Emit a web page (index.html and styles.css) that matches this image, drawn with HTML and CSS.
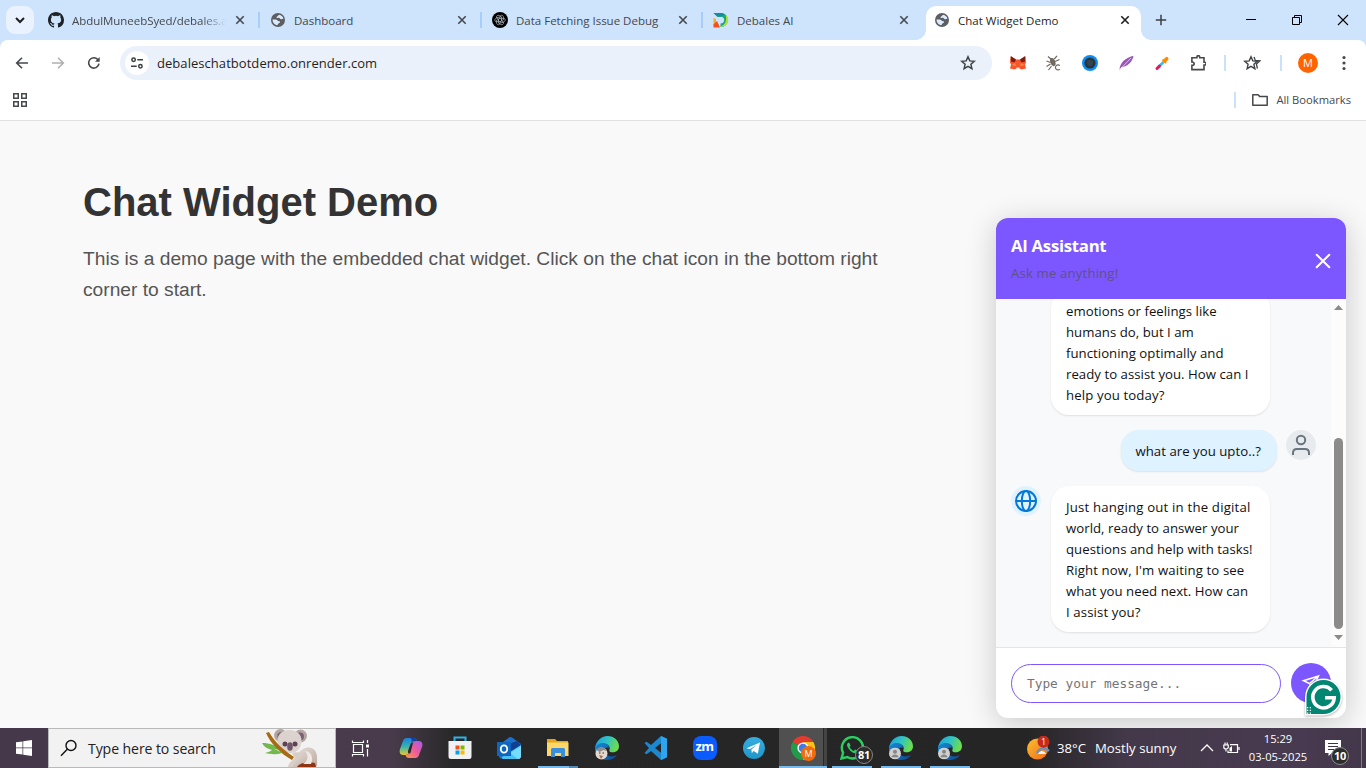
FILE: index.html
```html
<!DOCTYPE html>
<html lang="en">
<head>
<meta charset="utf-8">
<title>Chat Widget Demo</title>
<link rel="stylesheet" href="styles.css">
</head>
<body>
<svg class="defs" aria-hidden="true">
  <defs>
    <linearGradient id="edgeTop" x1="0" y1="0" x2="1" y2=".3"><stop offset="0" stop-color="#1b9de2"/><stop offset=".55" stop-color="#2fc3c4"/><stop offset="1" stop-color="#6bdc50"/></linearGradient>
    <linearGradient id="edgeLow" x1="0" y1="0" x2="1" y2="1"><stop offset="0" stop-color="#1689d6"/><stop offset="1" stop-color="#0d4a94"/></linearGradient>
    <linearGradient id="cpA" x1="0" y1="0" x2="0" y2="1"><stop offset="0" stop-color="#1f7fe0"/><stop offset=".5" stop-color="#35b3b0"/><stop offset="1" stop-color="#e8c92c"/></linearGradient>
    <linearGradient id="cpB" x1="1" y1="0" x2="0" y2="1"><stop offset="0" stop-color="#a65be8"/><stop offset=".5" stop-color="#ee5a9a"/><stop offset="1" stop-color="#ff9a4a"/></linearGradient>
    <linearGradient id="sun" x1="0" y1="0" x2="1" y2="1"><stop offset="0" stop-color="#fdc02c"/><stop offset="1" stop-color="#ee6a1c"/></linearGradient>
    <linearGradient id="fur" x1="0" y1="0" x2="1" y2="1"><stop offset="0" stop-color="#e9e1dc"/><stop offset="1" stop-color="#bba9a0"/></linearGradient>
    <linearGradient id="tg" x1="0" y1="0" x2="0" y2="1"><stop offset="0" stop-color="#37aee2"/><stop offset="1" stop-color="#1e96c8"/></linearGradient>
    <symbol id="close" viewBox="0 0 10 10"><path d="M1.300 1.300l7.400 7.400M8.700 1.300L1.300 8.700" fill="none" stroke="currentColor" stroke-width="1.600"/></symbol>
    <symbol id="globe" viewBox="0 0 16 16"><circle cx="8" cy="8" r="7" fill="#5b5f63"/><path d="M9 2.700c2.300.3 4 1.700 4.400 3.900-.8.300-1.500.9-2.400.7-1-.2-1-1.300-2.100-1.500-.9-.2-1.200.4-2 .2-.7-.4-.2-1.300.5-1.700.8-.6.900-1 1.600-1.600zM2.500 7.600l3.200-.1c1.400.1 1.600 1.100 2.600 1.500 1 .3 1.700.2 1.700 1.100 0 1.200-1.500 1-2 1.900-.3.600-.2 1.200-1 1.200C4.300 12.800 2.400 10.500 2.500 7.600z" fill="#dceafb"/></symbol>
    <symbol id="star" viewBox="0 0 16 16"><path d="M8 1.800l1.800 4.100 4.500.4-3.400 3 1 4.400L8 11.400l-3.900 2.300 1-4.400-3.400-3 4.500-.4z" fill="none" stroke="#3f4246" stroke-width="1.500"/></symbol>
    <symbol id="edge" viewBox="0 0 24 24">
      <path d="M0 12C1 5 6 0 12.500 0 19 0 24 4.600 24 10.300c0 3.700-2.600 6-6 6-2.800 0-4.200-1.100-3.700-2.100C15.600 11.500 14 8 9.500 8 5 8 1 10.500 0 15z" fill="url(#edgeTop)"/>
      <path d="M0 12c1.500-4 5-5.500 9-5 3 .4 5 2.300 5.100 5-3.200-1.700-5.700 1.500-4 5 1.700 3.600 7 4.600 12 1.700C20 22 16 24 12 24 5 24-.5 18.500 0 12z" fill="url(#edgeLow)"/>
    </symbol>
    <symbol id="person" viewBox="0 0 13 13"><circle cx="6.500" cy="6.500" r="6.500" fill="#d0d0d0"/><circle cx="6.500" cy="4.700" r="2.200" fill="#868686"/><path d="M2.700 10.500c.3-4 7.300-4 7.600 0z" fill="#868686"/></symbol>
  </defs>
</svg>

<header class="tabstrip">
  <div class="tab-search"><svg width="12" height="12" viewBox="0 0 12 12"><path d="M2 4l4 4 4-4" fill="none" stroke="#1f1f1f" stroke-width="2"/></svg></div>
  <div class="tab first">
    <svg class="favicon" viewBox="0 0 16 16"><path fill="#1f2328" fill-rule="evenodd" d="M8 0C3.580 0 0 3.580 0 8c0 3.540 2.290 6.530 5.470 7.590.4.070.55-.17.550-.38 0-.19-.01-.82-.01-1.490-2.010.37-2.530-.49-2.690-.94-.09-.23-.48-.94-.82-1.130-.28-.15-.68-.52-.01-.53.630-.01 1.080.58 1.230.82.720 1.210 1.870.87 2.330.66.070-.52.280-.87.510-1.070-1.780-.2-3.640-.89-3.640-3.950 0-.87.310-1.590.82-2.150-.08-.2-.36-1.020.08-2.120 0 0 .67-.21 2.200.82a7.600 7.600 0 014 0c1.530-1.040 2.200-.82 2.200-.82.440 1.100.16 1.920.08 2.120.510.56.820 1.270.82 2.150 0 3.070-1.870 3.750-3.650 3.950.290.25.540.73.540 1.480 0 1.070-.01 1.930-.01 2.200 0 .21.150.46.550.38A8.010 8.010 0 0016 8c0-4.420-3.580-8-8-8z"/></svg>
    <span class="tab-title faded">AbdulMuneebSyed/debales.a</span><svg class="x"><use href="#close"/></svg>
  </div>
  <div class="tab divided second">
    <svg class="favicon"><use href="#globe"/></svg><span class="tab-title">Dashboard</span><svg class="x"><use href="#close"/></svg>
  </div>
  <div class="tab divided">
    <svg class="favicon" viewBox="0 0 16 16"><circle cx="8" cy="8" r="8"/><g fill="none" stroke="#cbd3da" stroke-width=".7" transform="translate(1.200 1.200) scale(.85)"><g id="petal"><path d="M8 6.200V4.500c0-2.800 3.800-2.900 4 0v3.300L8 10"/></g><use href="#petal" transform="rotate(60 8 8)"/><use href="#petal" transform="rotate(120 8 8)"/><use href="#petal" transform="rotate(180 8 8)"/><use href="#petal" transform="rotate(240 8 8)"/><use href="#petal" transform="rotate(300 8 8)"/></g></svg>
    <span class="tab-title">Data Fetching Issue Debug</span><svg class="x"><use href="#close"/></svg>
  </div>
  <div class="tab divided fourth">
    <svg class="favicon" viewBox="0 0 16 16"><path d="M.5 1h7c4.500 0 7.500 3.300 7.500 7s-3 7-7.500 7v-3.500c2.500 0 3.700-1.600 3.700-3.500S10 4.800 8 4.800H4.500z" fill="#18a779"/><path d="M.5 1h7c1.500 0 3 .5 4 1.200L8 4.800H4.500z" fill="#168d9c"/><path d="M12.500 2.500c4 3.500 3.500 8.500-.5 11.200L8 15v-.8c5-1.700 6-6.700 4.500-11.700z" fill="#b6df38"/><path d="M.5 6l2.500 1v4L.5 13z" fill="#f6ae26"/><path d="M.5 12.500L4 9l3 6.500H.5z" fill="#f4501e"/></svg>
    <span class="tab-title">Debales AI</span><svg class="x"><use href="#close"/></svg>
  </div>
  <div class="tab active">
    <svg class="favicon"><use href="#globe"/></svg><span class="tab-title">Chat Widget Demo</span><svg class="x"><use href="#close"/></svg>
  </div>
  <svg class="newtab" viewBox="0 0 12 12"><path d="M6 .8v10.400M.8 6h10.400" stroke="#3c3f43" stroke-width="1.500"/></svg>
  <div class="window-buttons">
    <svg width="12" height="12" viewBox="0 0 12 12"><path d="M1 5.500h10" stroke="#000"/></svg>
    <svg width="12" height="12" viewBox="0 0 12 12"><path d="M1.500 3.500h7v7h-7zM3.500 3.500v-2h7v7h-2" fill="none" stroke="#000"/></svg>
    <svg width="12" height="12" viewBox="0 0 12 12"><path d="M1 1l10 10M11 1L1 11" stroke="#000" stroke-width="1.100"/></svg>
  </div>
</header>

<div class="chrome">
  <div class="toolbar">
    <svg class="nav" viewBox="0 0 16 16"><path d="M14 8H3M8 2.700L2.700 8 8 13.300" fill="none" stroke="#45484c" stroke-width="1.600"/></svg>
    <svg class="nav" viewBox="0 0 16 16"><path d="M2 8h11M8 2.700L13.300 8 8 13.300" fill="none" stroke="#aeb0b3" stroke-width="1.600"/></svg>
    <svg class="nav" viewBox="0 0 16 16"><path d="M13 8.700A5.200 5.200 0 1 1 11.800 4.500l1 1" fill="none" stroke="#45484c" stroke-width="1.600"/><path d="M13.700 2v4.800H9z" fill="#45484c"/></svg>
    <div class="omnibox">
      <div class="site-info"><svg width="14" height="14" viewBox="0 0 14 14"><g fill="none" stroke="#3a3d41" stroke-width="1.500"><circle cx="3.600" cy="3.800" r="1.700"/><path d="M7.300 3.800H13M1 10.200h5.700"/><circle cx="10.400" cy="10.200" r="1.700"/></g></svg></div>
      <span class="url">debaleschatbotdemo.onrender.com</span>
      <svg class="i16"><use href="#star"/></svg>
    </div>
    <div class="extensions">
      <svg class="i16" viewBox="0 0 16 16"><path d="M.5 1.500l5.500 3h4l5.500-3 .5 6-1 2 1 4-4.500 1-2-1h-3l-2 1-4.500-1 1-4-1-2z" fill="#f5572b"/><path d="M.8 1l5.200 3.500-1.500 3-3.500-1zM15.200 1L10 4.500l1.500 3 3.500-1z" fill="#7b1d12"/><path d="M1.500 10L5 8l1 3zM14.500 10L11 8l-1 3z" fill="#ff8a4a"/><path d="M6.500 12.500h3V14h-3z" fill="#f5e3da"/></svg>
      <svg class="i16" viewBox="0 0 16 16"><g fill="none" stroke="#706a60" stroke-width="1.200"><path d="M2 1.500l3.500 3M11 .8L8.300 4M.5 6l4 1.500M13.500 4.500L9 6.500M.5 11.500L4.500 9M2.500 15l3-4"/><path d="M13.800 10.700a2.500 2.500 0 1 0 0 3.400"/></g><ellipse cx="6.800" cy="7" rx="2.500" ry="4.200" transform="rotate(-18 7 7)" fill="#706a60"/></svg>
      <svg class="i16" viewBox="0 0 16 16"><circle cx="8" cy="8" r="8" fill="#0b8df2"/><circle cx="8" cy="8" r="5.600" fill="#26343d"/><circle cx="8" cy="8" r="3.100" fill="#34454f"/></svg>
      <svg class="i16" viewBox="0 0 16 16"><path d="M1.500 14.500C2 8 6.500 3 15.500.7 14.500 7 9.500 11.500 3.500 12z" fill="#9a56b8"/><path d="M1 15.500L13 3" stroke="#e5c9f0" stroke-width=".9"/></svg>
      <svg class="i16" viewBox="0 0 16 16"><path d="M4 12.500L9.500 7" stroke="#39bff2" stroke-width="2.600"/><path d="M3 13.500L5.500 11" stroke="#e6175c" stroke-width="3" stroke-linecap="round"/><path d="M8.500 4.500l3.500 3.500" stroke="#ff8a00" stroke-width="1.800"/><path d="M10.800 5.700L12.700 3.700" stroke="#ff8a00" stroke-width="3.600" stroke-linecap="round"/></svg>
      <svg class="i16" viewBox="-.7 0 16 16"><path d="M1.200 2.800h5V2a1.400 1.400 0 0 1 2.800 0v.8h4.300v4.400h.7a1.400 1.400 0 0 1 0 2.800h-.7v4.600H1.200v-4.200c3 0 3-3.400 0-3.400z" fill="none" stroke="#45484c" stroke-width="1.600"/></svg>
    </div>
    <i class="rule r1"></i>
    <svg class="i18" viewBox="0 0 18 16"><path d="M8 1.800l1.800 4.100 4.500.4-3.400 3 1 4.400L8 11.400l-3.900 2.300 1-4.400-3.400-3 4.500-.4z" fill="none" stroke="#3f4246" stroke-width="1.400"/><path d="M11 2l1.300 3.500 4.500.4-3.400 3 1 4.600" fill="none" stroke="#3f4246" stroke-width="1.300"/></svg>
    <i class="rule r2"></i>
    <span class="profile">M</span>
    <svg class="dots" viewBox="0 0 4 16"><circle cx="2" cy="2.500" r="1.600"/><circle cx="2" cy="8" r="1.600"/><circle cx="2" cy="13.500" r="1.600"/></svg>
  </div>
  <div class="bookmarks">
    <svg width="14" height="14" viewBox="0 0 14 14"><path d="M.75.750h4.500v4.500H.750zM8.750.750h4.500v4.500h-4.500zM.750 8.750h4.500v4.500H.750zM8.750 8.750h4.500v4.500h-4.500z" fill="none" stroke="#45484c" stroke-width="1.500"/></svg>
    <div class="all-bookmarks"><i class="rule"></i><svg width="16" height="14" viewBox="0 0 16 14"><path d="M.8 12.200V1.800h5.200L7.600 3.400h7.600v8.800z" fill="none" stroke="#45484c" stroke-width="1.500" stroke-linejoin="round"/></svg><span>All Bookmarks</span></div>
  </div>
</div>

<main class="page">
  <div class="container">
    <h1>Chat Widget Demo</h1>
    <p>This is a demo page with the embedded chat widget. Click on the chat icon in the bottom right corner to start.</p>
  </div>

  <section class="widget">
    <div class="widget-head">
      <div><h2>AI Assistant</h2><p>Ask me anything!</p></div>
      <svg width="16" height="16" viewBox="0 0 16 16"><path d="M1.700 1.700l12.600 12.600M14.300 1.700L1.700 14.300" stroke="#fff" stroke-width="2" stroke-linecap="round"/></svg>
    </div>
    <div class="widget-body">
      <div class="messages">
        <div class="msg bot older">
          <div class="bubble"><span>emotions or feelings like</span><span>humans do, but I am</span><span>functioning optimally and</span><span>ready to assist you. How can I</span><span class="mid">help you today?</span></div>
        </div>
        <div class="msg user">
          <div class="bubble"><span>what are you upto..?</span></div>
          <div class="avatar"><svg width="20" height="22" viewBox="0 0 20 22"><g fill="none" stroke="#68757f" stroke-width="2"><circle cx="10" cy="6" r="4.200"/><path d="M2 21v-2c0-2.700 1.600-4 4-4h8c2.400 0 4 1.300 4 4v2"/></g></svg></div>
        </div>
        <div class="msg bot">
          <div class="avatar"><svg width="24" height="24" viewBox="0 0 24 24"><g fill="none" stroke="#0478d6" stroke-width="2"><circle cx="12" cy="12" r="10"/><path d="M2 12h20"/><ellipse cx="12" cy="12" rx="4.200" ry="10"/></g></svg></div>
          <div class="bubble"><span class="wide">Just hanging out in the digital</span><span>world, ready to answer your</span><span>questions and help with tasks!</span><span class="mid">Right now, I'm waiting to see</span><span>what you need next. How can</span><span class="mid">I assist you?</span></div>
        </div>
      </div>
      <div class="scrollbar">
        <svg width="9" height="5" viewBox="0 0 9 5"><path d="M0 5L4.500 0 9 5z" fill="#8b8b8b"/></svg>
        <div class="thumb"></div>
        <svg width="9" height="5" viewBox="0 0 9 5"><path d="M0 0h9L4.500 5z" fill="#8b8b8b"/></svg>
      </div>
    </div>
    <div class="composer">
      <div class="field">Type your message...</div>
      <div class="send"><svg width="20" height="20" viewBox="0 0 20 20"><path d="M17.500 3L2.500 7.700l6 2.800 3 6.500zM17.500 3l-9 7.500" fill="none" stroke="#fff" stroke-width="1.500"/></svg></div>
    </div>
    <svg class="grammarly" width="40" height="40" viewBox="0 0 40 40"><path d="M2 38.500V20A18.500 18.500 0 1 1 20.500 38.500z" fill="#fff"/><path d="M3.500 37V20A17 17 0 1 1 20.500 37z" fill="#028571"/><path d="M28.600 13.200A10.700 10.700 0 1 0 31.200 20.800H22" fill="none" stroke="#fff" stroke-width="3.600"/><g fill="#fff"><path d="M4 30h1.300v1.300H4zM6.700 30H8v1.300H6.700zM4 32.700h1.300V34H4zM6.700 32.700H8V34H6.700zM4 35.400h1.300v1.300H4zM6.700 35.400H8v1.300H6.700z"/></g></svg>
  </section>
</main>

<footer class="taskbar">
  <div class="start"><svg width="16" height="16" viewBox="0 0 16 16"><path d="M0 2.300L6.500 1.400v6.200H0zM7.200 1.300L16 0v7.600H7.200zM0 8.300h6.500v6.300L0 13.700zM7.200 8.300H16V16l-8.800-1.300z" fill="#fff"/></svg></div>
  <div class="search">
    <svg width="18" height="18" viewBox="0 0 18 18"><circle cx="11" cy="6.500" r="5" fill="none" stroke="#111" stroke-width="1.400"/><path d="M7.300 10.200L1 16.700" stroke="#111" stroke-width="1.400"/></svg>
    <span>Type here to search</span>
    <svg class="koala" width="58" height="38" viewBox="0 0 58 38">
      <path d="M0 14c8 0 14 2 18 7l-7-1c4 1 7 2 9 4-6 2-12 1-17 0 4-1 6-2 7-3-4-1-8-3-10-7z" fill="#72b94d"/>
      <path d="M30 38c1-8 4-14 11-18 8-4 14 1 14 8s1 10-2 10z" fill="url(#fur)"/>
      <path d="M35 38c2-4 11-6 18-4l1 4z" fill="#8c3615"/>
      <circle cx="18.500" cy="6.500" r="6.500" fill="#b4a5a2"/><circle cx="19" cy="7" r="3.700" fill="#786374"/><circle cx="38.500" cy="7" r="6.500" fill="#b4a5a2"/><circle cx="38" cy="7.500" r="4" fill="#786374"/>
      <path d="M15.500 12c0-7 5-11 12-11s12 4 12 11c0 6-4 12-11 12s-13-5-13-12z" fill="#ddd3ce"/>
      <path d="M4 4l3-1c5 9 13 17 25 25l-2 3C18 24 9 15 4 4z" fill="#a66b13"/>
      <circle cx="23" cy="15" r="2.500" fill="#5d4156"/><circle cx="33" cy="15" r="2.500" fill="#5d4156"/><ellipse cx="28" cy="17.500" rx="2.800" ry="4.300" fill="#705669"/>
      <path d="M30 24c5-2 9 0 9 3 0 3-3 4-5 5l-3 6h-5c1-5 5-7 7-9z" fill="#d8cdc7"/><path d="M43 22c6 0 9 7 6 13h-8c5-3 6-8 2-13z" fill="#eee8e3"/>
    </svg>
  </div>
  <div class="apps">
    <div class="app view"><svg width="18" height="18" viewBox="0 0 18 18"><path d="M2.500 5.500h9v8h-9zM1.500 1.500v2h11v-2M1.500 17.500v-2h11v2M16.500 1v3M16.500 10v7.500" fill="none" stroke="#fff" stroke-width="1.200"/><path d="M15 5.500h3v3h-3z" fill="#fff"/></svg></div>
    <div class="app"><svg width="24" height="24" viewBox="0 0 24 24"><path d="M7.500 2H15c2 0 2.500 1 3 3l-4 1-3.500 10c-.8 2.200-2 3-4 3H4c-3 0-4-3-3-6l3-8c.8-2.200 1.800-3 3.500-3z" fill="url(#cpA)"/><path d="M16.500 22H10c-2 0-3-1-3.500-3l3.500-1 3.500-10c.8-2.200 2-3 4-3H20c3 0 4 3 3 6l-3 8c-.8 2.200-1.800 3-3.500 3z" fill="url(#cpB)"/><path d="M12.500 7c.5-1.500 1.300-2 2.500-2h3c-.5-2-1-3-3-3h-4c2 0 1.800 3 1.500 5z" fill="#193f9d"/><path d="M10 12l2-5 2-.5L11.500 17l-2 .5c-1-1.500-.5-3 .5-5.500z" fill="#30252f"/></svg></div>
    <div class="app"><svg width="24" height="24" viewBox="0 0 24 24"><path d="M6.500 5.500V1.500h11v4" fill="none" stroke="#30b2e8" stroke-width="2"/><path d="M.5 5h23v15.500a2.500 2.500 0 0 1-2.500 2.500H3a2.500 2.500 0 0 1-2.500-2.500z" fill="#f1f1f3"/><path d="M7.500 9.500h4v4h-4z" fill="#f25022"/><path d="M12.500 9.500h4v4h-4z" fill="#7fba00"/><path d="M7.500 14.500h4v4h-4z" fill="#00a4ef"/><path d="M12.500 14.500h4v4h-4z" fill="#ffb900"/></svg></div>
    <div class="app"><svg width="24" height="24" viewBox="0 0 24 24"><path d="M2 9l10-7.500a3 3 0 0 1 3 0L24 8v12c0 1.500-1 3-3 3H6c-2.500 0-4-1-4-3z" fill="#1b72cd"/><path d="M12 8l8-3 4 4-9 8z" fill="#103e91"/><path d="M24 9L5 21c0 2 1 2 2 2h14c2 0 3-1.500 3-3z" fill="#48c2f4"/><path d="M24 10L13 17l8 6c2 0 3-1.500 3-3z" fill="#75dcfb"/><path d="M0 6h14v14H0z" fill="#0f66c0"/><ellipse cx="7" cy="13" rx="3.200" ry="3.700" fill="none" stroke="#fff" stroke-width="1.800"/></svg></div>
    <div class="app open split"><svg width="24" height="24" viewBox="0 0 24 24"><path d="M1 3h8l2 2h11v15H1z" fill="#e5a516"/><path d="M1 6.500h21.500V20H1z" fill="#fed76a"/><path d="M5 21v-7.500c0-.8.700-1.500 1.500-1.500h11c.8 0 1.500.7 1.500 1.500V21h-4v-4H9v4z" fill="#398fda"/></svg></div>
    <div class="app"><svg width="24" height="24" viewBox="0 0 24 24"><use href="#edge" width="24" height="24"/><circle cx="6.500" cy="17.500" r="6" fill="#e4d8cf"/><path d="M1.500 14c2-4 8-4 10 1l-3-1-4 2z" fill="#8c8b8c"/><path d="M4 19l4 1-2 3z" fill="#a36d5b"/><path d="M4 17h1.500M7.500 17H9" stroke="#3d3433"/></svg></div>
    <div class="app"><svg width="24" height="24" viewBox="0 0 24 24"><path d="M17 0l6 2.700v18.600L17 24l-10-9-4.500 3.300L.5 17 5 12 .5 7l2-1.300L7 9zM17.300 7L11 12l6.300 5z" fill="#1c88d0" fill-rule="evenodd"/><path d="M17 0l6 2.700v18.600L17 24z" fill="#2ea5ef"/></svg></div>
    <div class="app"><div class="zoom-app">zm</div></div>
    <div class="app"><svg width="24" height="24" viewBox="0 0 24 24"><circle cx="12" cy="12" r="11" fill="url(#tg)"/><path d="M4.500 12.200L18 6.500l-2.200 11.300-4-2.800-2 2-.4-3.600 5.600-4.700-7 4.300z" fill="#fff"/></svg></div>
    <div class="app open current"><svg width="24" height="24" viewBox="0 0 24 24"><path d="M12 12L1.600 6A12 12 0 0 1 22.400 6z" fill="#e33b2e"/><path d="M12 12L1.600 6A12 12 0 0 0 12 24l5.200-9z" fill="#229a49"/><path d="M12 6h10.400A12 12 0 0 1 12 24l5.200-9z" fill="#fbc116"/><circle cx="12" cy="12" r="5.600" fill="#fff"/><circle cx="12" cy="12" r="4.300" fill="#3a7cec"/></svg><span class="m-badge">M</span></div>
    <div class="app open"><svg width="24" height="24" viewBox="0 0 24 24"><path d="M1.500 22.500l1.600-5.800A10.600 10.600 0 1 1 7.300 21z" fill="none" stroke="#2ace61" stroke-width="2.400"/><path d="M8.500 6.500c-2 1-2 3 0 6s5 5 7.500 4.700c2-.5 2-2 1.700-2.500l-2.600-1.300-1.300 1.500c-2-.8-3.300-2-4.200-3.900l1-1.300-1.100-2.700z" fill="#2ace61"/></svg><span class="count">81</span></div>
    <div class="app open"><svg width="24" height="24" viewBox="0 0 24 24"><use href="#edge" width="24" height="24"/><use href="#person" x="0" y="11.500" width="12" height="12"/></svg></div>
    <div class="app open"><svg width="24" height="24" viewBox="0 0 24 24"><use href="#edge" width="24" height="24"/><use href="#person" x="0" y="11.500" width="12" height="12"/></svg></div>
  </div>
  <div class="tray">
    <div class="weather"><svg width="24" height="24" viewBox="0 0 24 24"><circle cx="10.500" cy="13" r="10.500" fill="url(#sun)"/><path d="M10 17c2-5 8-6 12-2" fill="none" stroke="#6d8fbd" stroke-width="2.500"/><path d="M11 18c2-4 6-4 8 0z" fill="#e8f2fb"/><circle cx="16.500" cy="5.700" r="6" fill="#c42b1c"/></svg><b>1</b></div>
    <span class="temp">38°C</span><span class="sunny">Mostly sunny</span>
    <svg class="chev" width="14" height="8" viewBox="0 0 14 8"><path d="M1 7l6-6 6 6" fill="none" stroke="#fff" stroke-width="1.300"/></svg>
    <svg class="battery" width="17" height="12" viewBox="0 0 17 12"><path d="M7 2.600h7.500V10.500H5V8.500M16 5v3M.8 3h4.500v2c0 1-.7 2-2.200 2S.8 6 .8 5zM2 3V.5M4.200 3V.5M3 7v2.500" fill="none" stroke="#fff" stroke-width="1.200"/><path d="M6.500 9.500V6l2.500-2v5.500z" fill="#fff"/></svg>
    <div class="clock"><span>15:29</span><span class="date">03-05-2025</span></div>
    <div class="notes"><svg width="18" height="16" viewBox="0 0 18 16"><path d="M1 0h16v13H8l-3.500 3v-3H1z" fill="#fff"/><path d="M4 3.500h10M4 6.500h10M4 9.500h7" stroke="#3d3344" stroke-width="1.100"/></svg><span class="count">10</span></div>
    <i class="peek"></i>
  </div>
</footer>
</body>
</html>
```

FILE: styles.css
```css
* { box-sizing: border-box; }
body { margin: 0; width: 1366px; height: 768px; overflow: hidden; display: flex; flex-direction: column; font-family: "Open Sans", "Noto Sans", sans-serif; background: #cee3fc; color: #1f1f1f; }
svg { display: block; flex: none; }
h1, h2, p { margin: 0; }
.defs { width: 0; height: 0; flex: none; overflow: hidden; position: absolute; }

/* Tab strip */
.tabstrip { height: 40px; flex: none; display: flex; background: #cee3fc; }
.tab-search { width: 28px; height: 28px; margin: 6px 6px 0; border-radius: 9px; background: #e9f2fe; display: flex; align-items: center; justify-content: center; flex: none; }
.tab { width: 221px; height: 40px; padding: 0 13px 0 8px; display: flex; align-items: center; gap: 8px; flex: none; color: #45484c; }
.tab.first { width: 218px; }
.tab.second { width: 222px; }
.tab.divided { border-left: 2px solid #a8cdfa; border-image: linear-gradient(transparent 12px, #a8cdfa 12px, #a8cdfa 28px, transparent 28px) 1; padding-left: 10px; }
.tab.fourth { width: 225px; padding-right: 17px; }
.favicon { width: 16px; height: 16px; }
.tab-title { font-size: 11.500px; white-space: nowrap; line-height: 20px; padding-top: 1px; }
.faded { letter-spacing: -.05px; -webkit-mask-image: linear-gradient(90deg, #000 130px, transparent 154px); mask-image: linear-gradient(90deg, #000 130px, transparent 154px); }
.x { width: 10px; height: 10px; margin-left: auto; }
.tab.active { width: 215px; height: 34px; margin-top: 6px; background: #fff; border-radius: 10px 10px 0 0; color: #1f1f1f; position: relative; padding: 0 11px 6px 8px; }
.tab.active::before, .tab.active::after { content: ""; position: absolute; bottom: 0; width: 10px; height: 10px; }
.tab.active::before { left: -10px; background: radial-gradient(circle at 0 0, transparent 9.500px, #fff 10px); }
.tab.active::after { right: -10px; background: radial-gradient(circle at 100% 0, transparent 9.500px, #fff 10px); }
.newtab { width: 12px; height: 12px; margin: 14px 0 0 14px; }
.window-buttons { margin: 14px 17px 0 auto; display: flex; gap: 34px; }

/* Toolbar and bookmarks */
.chrome { height: 81px; flex: none; background: #fff; border-bottom: 1px solid #e0e1e2; border-radius: 8px 8px 0 0; }
.toolbar { height: 46px; display: flex; align-items: center; padding-left: 14px; }
.nav { width: 16px; height: 16px; margin-right: 20px; }
.omnibox { width: 872px; height: 34px; margin-left: -2px; border-radius: 17px; background: #eaf1fa; display: flex; align-items: center; padding: 0 16px 0 5px; flex: none; }
.site-info { width: 24px; height: 24px; border-radius: 50%; background: #fff; display: flex; align-items: center; justify-content: center; }
.url { font-size: 13px; letter-spacing: .05px; margin-left: 8px; margin-right: auto; }
.i16 { width: 16px; height: 16px; }
.i18 { width: 18px; height: 16px; }
.extensions { display: flex; gap: 20px; margin-left: 18px; }
.rule { width: 2px; height: 16px; background: #cbe0fb; flex: none; }
.r1 { margin: 0 17px 0 18px; }
.r2 { margin: 0 16px 0 19px; }
.profile { width: 20px; height: 20px; border-radius: 50%; background: #ff6400; color: #fff; font-size: 11px; line-height: 20px; text-align: center; }
.dots { width: 4px; height: 16px; margin-left: 24px; fill: #45484c; }
.bookmarks { height: 28px; display: flex; align-items: center; justify-content: space-between; padding: 0 15px 0 13px; }
.all-bookmarks { display: flex; align-items: center; font-size: 11.200px; color: #45484c; }
.all-bookmarks svg { margin: 0 8px 0 16px; }
.all-bookmarks span { margin-top: -1px; }

/* Page */
.page { flex: 1; background: #f9f9f9; position: relative; overflow: hidden; padding: 49px 0 0 83px; }
.container { width: 800px; font-family: "Liberation Sans", Arial, sans-serif; }
.container h1 { font-size: 40px; line-height: 64px; color: #333; }
.container p { font-size: 19.200px; line-height: 30.720px; color: #555; margin-top: 10px; }

/* Floating chat widget */
.widget { position: absolute; right: 20px; bottom: 10px; width: 350px; height: 500px; border-radius: 12px; background: #fff; display: flex; flex-direction: column; box-shadow: 0 5px 30px rgba(0,0,0,.2); }
.widget-head { height: 81px; flex: none; padding: 4px 15px 0; border-radius: 12px 12px 0 0; background: #7c57ff; display: flex; justify-content: space-between; align-items: center; }
.widget-head h2 { font-size: 16.800px; letter-spacing: -.3px; line-height: 27px; font-weight: 700; color: #fff; }
.widget-head p { font-size: 13.200px; letter-spacing: .15px; line-height: 22px; color: #5e5287; margin: 3px 0 5px; }
.widget-body { height: 348px; flex: none; display: flex; background: #f8f9fb; overflow: hidden; }
.messages { width: 335px; height: 348px; padding: 15px; display: flex; flex-direction: column; justify-content: flex-end; gap: 15px; font-size: 13.200px; letter-spacing: .03px; line-height: 21px; color: #111; }
.msg { display: flex; gap: 10px; align-items: flex-start; flex: none; }
.msg.user { justify-content: flex-end; gap: 9.500px; }
.msg.older { padding-left: 40px; }
.bubble { width: 219px; padding: 11px 15px 9px; border-radius: 18px; background: #fff; box-shadow: 0 1px 2px rgba(0,0,0,.1); flex: none; }
.bubble span { display: block; white-space: nowrap; width: max-content; }
.bubble .mid { letter-spacing: .12px; }
.bubble .wide { letter-spacing: .19px; }
.user .bubble { width: 156px; background: #dff2ff; }
.avatar { width: 30px; height: 30px; border-radius: 50%; background: #e0f2ff; display: flex; align-items: center; justify-content: center; flex: none; }
.user .avatar { background: #e8ebee; }
.scrollbar { width: 15px; height: 348px; background: #fcfcfc; padding: 6px 3px 7px 3px; display: flex; flex-direction: column; align-items: center; }
.thumb { width: 9px; height: 191px; border-radius: 5px; background: #8b8b8b; margin-top: 128px; margin-bottom: 6px; flex: none; }
.composer { flex: 1; border-top: 1px solid #e5e5e7; padding: 15px; display: flex; gap: 10px; align-items: center; }
.field { width: 270px; height: 39px; border: 1px solid #7c57ff; border-radius: 20px; padding-left: 15px; font: 12.800px/37px "DejaVu Sans Mono", "Liberation Mono", monospace; color: #757575; white-space: nowrap; }
.send { width: 40px; height: 40px; border-radius: 50%; background: #7c57ff; display: flex; align-items: center; justify-content: center; }
.grammarly { position: absolute; right: 3px; bottom: 1px; filter: drop-shadow(0 1px 1px rgba(0,0,0,.3)); }

/* Taskbar */
.taskbar { height: 40px; flex: none; display: flex; color: #fff; background: linear-gradient(90deg, #44384a 0, #493b4c 390px, #272727 455px, #252525 1025px, #44394a 1130px, #483a50 1300px, #43374a); }
.start { width: 48px; display: flex; align-items: center; justify-content: center; flex: none; }
.search { width: 288px; height: 40px; background: #f2f2f2; border: 1px solid #b9b9b9; display: flex; align-items: center; color: #222; padding-left: 11px; flex: none; }
.search span { font-size: 14.100px; letter-spacing: -.1px; margin-left: 10px; flex: 1; white-space: nowrap; }
.koala { margin-right: 15px; }
.apps { display: flex; flex: none; }
.app { width: 49px; height: 40px; display: flex; align-items: center; justify-content: center; position: relative; flex: none; }
.app.view { width: 50px; padding-right: 2px; }
.app.open::after { content: ""; position: absolute; bottom: 0; left: 5px; width: 40px; height: 2px; background: #76b9ed; }
.app.split::after { background: linear-gradient(90deg, #76b9ed 31px, #5688b2 31px); }
.app.current { background: linear-gradient(90deg, transparent 1px, #505050 1px, #505050 45px, #292929 45px, #292929 46px, #444 46px); }
.app.current::after { left: 1px; width: 48px; }
.zoom-app { width: 24px; height: 24px; border-radius: 8px; background: #0b5cff; font-size: 13px; font-weight: 700; line-height: 21px; text-align: center; letter-spacing: -.5px; }
.m-badge { position: absolute; left: 23px; top: 18px; width: 15px; height: 15px; border-radius: 50%; background: #f26b0b; font-size: 9px; line-height: 15px; text-align: center; }
.count { position: absolute; left: 28px; top: 18px; width: 18px; height: 18px; border-radius: 50%; border: 1px solid #858585; background: #2c2c2c; font-size: 11px; font-weight: 700; line-height: 16px; letter-spacing: -.3px; display: flex; justify-content: center; }
.tray { margin-left: auto; display: flex; align-items: center; flex: none; width: 340px; height: 40px; }
.weather { position: relative; width: 24px; margin-left: 1px; }
.weather b { position: absolute; left: 13px; top: -1px; width: 7px; font-size: 9px; line-height: 13px; text-align: center; font-weight: 400; }
.temp, .sunny { font-size: 13.200px; white-space: nowrap; }
.temp { margin-left: 6px; width: 38px; }
.sunny { width: 84px; }
.chev { margin-left: 21px; }
.battery { margin-left: 9px; }
.clock { width: 60px; margin-left: 8px; display: flex; flex-direction: column; align-items: center; font-size: 11.200px; line-height: 18px; white-space: nowrap; }
.notes { position: relative; margin-left: 16px; width: 18px; height: 16px; }
.notes .count { left: 7px; top: 7px; border-color: #8b8b8b; }
.peek { width: 1px; height: 40px; background: #81798a; margin-left: auto; margin-right: 4px; }
```
